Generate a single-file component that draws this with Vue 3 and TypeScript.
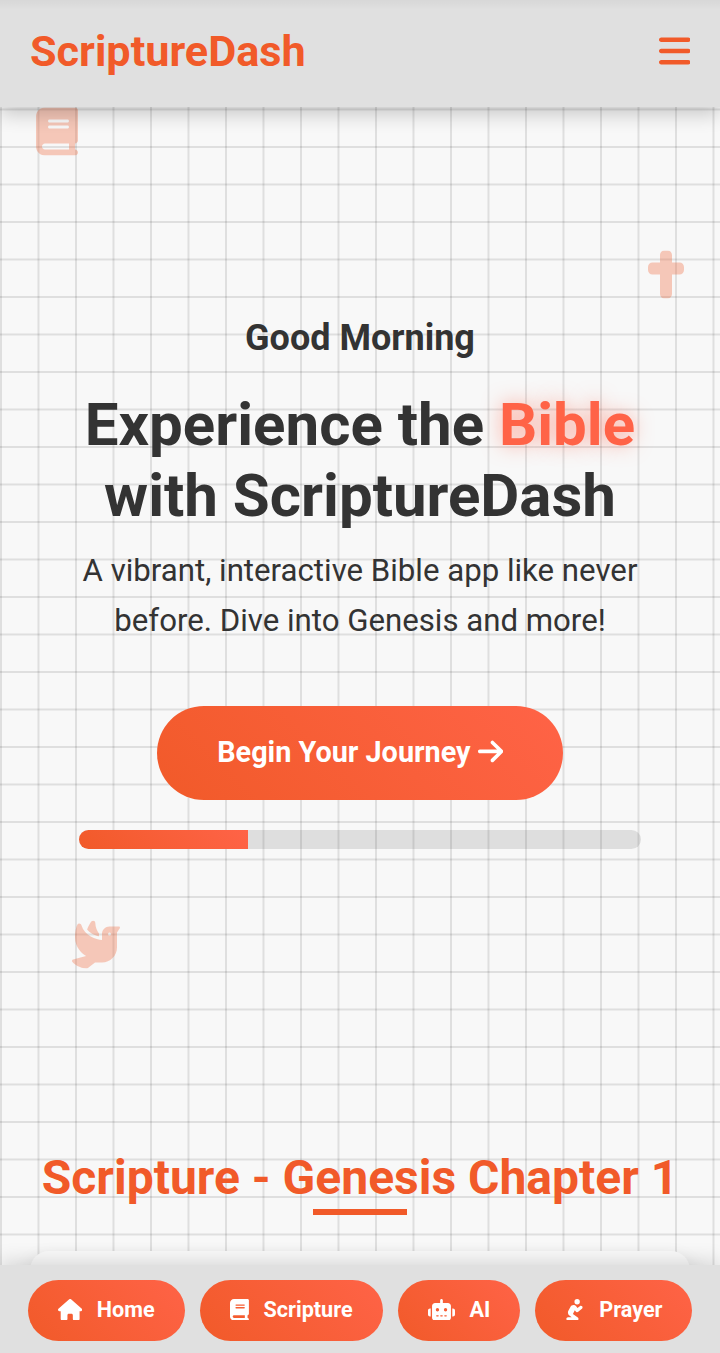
<script setup lang="ts">
interface Icon { w: number; d: string }

const icons: Record<string, Icon> = {
  bars: { w: 448, d: 'M0 96C0 78.3 14.3 64 32 64H416c17.7 0 32 14.3 32 32s-14.3 32-32 32H32C14.3 128 0 113.7 0 96zM0 256c0-17.7 14.3-32 32-32H416c17.7 0 32 14.3 32 32s-14.3 32-32 32H32c-17.7 0-32-14.3-32-32zM448 416c0 17.7-14.3 32-32 32H32c-17.7 0-32-14.3-32-32s14.3-32 32-32H416c17.7 0 32 14.3 32 32z' },
  book: { w: 448, d: 'M96 0C43 0 0 43 0 96V416c0 53 43 96 96 96H384h32c17.7 0 32-14.3 32-32s-14.3-32-32-32V384c17.7 0 32-14.3 32-32V32c0-17.7-14.3-32-32-32H384 96zm0 384H352v64H96c-17.7 0-32-14.3-32-32s14.3-32 32-32zm32-240c0-8.8 7.2-16 16-16H336c8.8 0 16 7.2 16 16s-7.2 16-16 16H144c-8.8 0-16-7.2-16-16zm16 48H336c8.8 0 16 7.2 16 16s-7.2 16-16 16H144c-8.8 0-16-7.2-16-16s7.2-16 16-16z' },
  cross: { w: 384, d: 'M176 0c-26.5 0-48 21.5-48 48v80H48c-26.5 0-48 21.5-48 48v32c0 26.5 21.5 48 48 48h80V464c0 26.5 21.5 48 48 48h32c26.5 0 48-21.5 48-48V256h80c26.5 0 48-21.5 48-48V176c0-26.5-21.5-48-48-48H256V48c0-26.5-21.5-48-48-48H176z' },
  dove: { w: 512, d: 'M160.8 96.5c14 17 31 30.9 49.5 42.2c25.9 15.8 53.7 25.9 77.7 31.6V138.8C265.8 108.5 250 71.5 248.6 28c-.4-11.3-7.5-21.5-18.4-24.4c-7.6-2-15.8-.2-21 5.8c-13.3 15.4-32.7 44.6-48.4 87.2zM320 144v30.6l0 0v1.3l0 0 0 32.1c-60.8-5.1-185-43.8-219.3-157.2C97.4 40 87.9 32 76.6 32c-7.9 0-15.3 3.9-18.8 11C46.8 65.9 32 112.1 32 176c0 116.9 80.1 180.5 118.4 202.8L11.8 416.6C6.7 418 2.6 421.8 .9 426.8s-.8 10.6 2.3 14.8C21.7 466.2 77.3 512 160 512c3.6 0 7.2-1.2 10-3.5L245.6 448H320c88.4 0 160-71.6 160-160V128l29.9-44.9c1.3-2 2.1-4.4 2.1-6.8c0-6.8-5.5-12.3-12.3-12.3H400c-44.2 0-80 35.8-80 80zm80-16a16 16 0 1 1 0 32 16 16 0 1 1 0-32z' },
  arrow: { w: 448, d: 'M438.6 278.6c12.5-12.5 12.5-32.8 0-45.3l-160-160c-12.5-12.5-32.8-12.5-45.3 0s-12.5 32.8 0 45.3L338.8 224 32 224c-17.7 0-32 14.3-32 32s14.3 32 32 32l306.7 0L233.4 393.4c-12.5 12.5-12.5 32.8 0 45.3s32.8 12.5 45.3 0l160-160z' },
  home: { w: 576, d: 'M575.8 255.5c0 18-15 32.1-32 32.1h-32l.7 160.2c0 2.7-.2 5.4-.5 8.1V472c0 22.1-17.9 40-40 40H456c-1.1 0-2.2 0-3.3-.1c-1.4 .1-2.8 .1-4.2 .1H416 392c-22.1 0-40-17.9-40-40V448 384c0-17.7-14.3-32-32-32H256c-17.7 0-32 14.3-32 32v64 24c0 22.1-17.9 40-40 40H160 128.1c-1.5 0-3-.1-4.5-.2c-1.2 .1-2.4 .2-3.6 .2H104c-22.1 0-40-17.9-40-40V360c0-.9 0-1.9 .1-2.8V287.6H32c-18 0-32-14-32-32.1c0-9 3-17 10-24L266.4 8c7-7 15-8 22-8s15 2 21 7L564.8 231.5c8 7 12 15 11 24z' },
  robot: { w: 640, d: 'M320 0c17.7 0 32 14.3 32 32V96H472c39.8 0 72 32.2 72 72V440c0 39.8-32.2 72-72 72H168c-39.8 0-72-32.2-72-72V168c0-39.8 32.2-72 72-72H288V32c0-17.7 14.3-32 32-32zM208 384c-8.8 0-16 7.2-16 16s7.2 16 16 16h32c8.8 0 16-7.2 16-16s-7.2-16-16-16H208zm96 0c-8.8 0-16 7.2-16 16s7.2 16 16 16h32c8.8 0 16-7.2 16-16s-7.2-16-16-16H304zm96 0c-8.8 0-16 7.2-16 16s7.2 16 16 16h32c8.8 0 16-7.2 16-16s-7.2-16-16-16H400zM264 256a40 40 0 1 0 -80 0 40 40 0 1 0 80 0zm152 40a40 40 0 1 0 0-80 40 40 0 1 0 0 80zM48 224H64V416H48c-26.5 0-48-21.5-48-48V272c0-26.5 21.5-48 48-48zm544 0c26.5 0 48 21.5 48 48v96c0 26.5-21.5 48-48 48H576V224h16z' },
  pray: { w: 448, d: 'M352 64A64 64 0 1 0 224 64a64 64 0 1 0 128 0zM232.7 264l22.9 31.5c6.5 8.9 16.3 14.7 27.2 16.1s21.9-1.7 30.4-8.7l88-72c17.1-14 19.6-39.2 5.6-56.3s-39.2-19.6-56.3-5.6l-55.2 45.2-26.2-36C253.6 156.7 228.6 144 202 144c-30.9 0-59.2 17.1-73.6 44.4L79.8 280.9c-20.2 38.5-9.4 85.9 25.6 111.8L158.6 432H72c-22.1 0-40 17.9-40 40s17.9 40 40 40H280c17.3 0 32.6-11.1 38-27.5s-.3-34.4-14.2-44.7L187.7 354l45-90z' },
}

const tabs = [
  { icon: 'home', label: 'Home' },
  { icon: 'book', label: 'Scripture' },
  { icon: 'robot', label: 'AI' },
  { icon: 'pray', label: 'Prayer' },
]
const floating = ['book', 'cross', 'dove']
const progress = 30
const box = (n: string) => `0 0 ${icons[n].w} 512`
</script>

<template>
  <div class="app">
    <header class="header">
      <div class="logo">ScriptureDash</div>
      <button class="menu" aria-label="Menu">
        <svg class="icon" :viewBox="box('bars')"><path :d="icons.bars.d" /></svg>
      </button>
    </header>

    <main class="content">
      <section class="hero">
        <svg v-for="n in floating" :key="n" class="icon float" :class="'float-' + n" :viewBox="box(n)">
          <path :d="icons[n].d" />
        </svg>
        <div class="greeting">Good Morning</div>
        <h1>Experience the <span class="glow">Bible</span><br />with ScriptureDash</h1>
        <p>A vibrant, interactive Bible app like never<br />before. Dive into Genesis and more!</p>
        <button class="cta">
          <span>Begin Your Journey</span>
          <svg class="icon" :viewBox="box('arrow')"><path :d="icons.arrow.d" /></svg>
        </button>
        <div class="progress"><div class="fill" :style="{ width: progress + '%' }"></div></div>
      </section>

      <section class="scripture">
        <h2>Scripture - Genesis Chapter 1</h2>
        <div class="rule"></div>
        <div class="card"></div>
      </section>
    </main>

    <nav class="tabs">
      <button v-for="t in tabs" :key="t.label" class="tab">
        <svg class="icon" :viewBox="box(t.icon)"><path :d="icons[t.icon].d" /></svg>
        <span>{{ t.label }}</span>
      </button>
    </nav>
  </div>
</template>

<style>
body { background: #f8f8f8; }
</style>

<style scoped>
.app {
  height: 1353px;
  overflow: hidden;
  display: flex;
  flex-direction: column;
  font-family: Roboto, sans-serif;
  color: #333;
  background-color: #f8f8f8;
  background-image:
    linear-gradient(rgba(0, 0, 0, 0.1) 1.875px, transparent 1.875px),
    linear-gradient(90deg, rgba(0, 0, 0, 0.1) 1.875px, transparent 1.875px);
  background-size: 37.5px 37.5px;
  background-position: 0 -4px;
}
button { border: 0; margin: 0; font-family: inherit; color: inherit; background: none; }
.icon { display: block; height: 1em; width: auto; fill: currentColor; flex: none; }

.header {
  position: relative;
  z-index: 2;
  flex: none;
  box-sizing: border-box;
  height: 107px;
  padding: 0 30px;
  display: flex;
  align-items: center;
  justify-content: space-between;
  color: #f15a29;
  background: linear-gradient(rgba(0, 0, 0, 0.04), transparent 10px) #e0e0e0;
  box-shadow: 0 7.5px 18.75px rgba(0, 0, 0, 0.2);
}
.logo { font-size: 43.2px; font-weight: 700; line-height: 50px; padding-bottom: 4px; }
.menu { padding: 0 0 6px; font-size: 36px; }

.content { flex: 1; min-height: 0; overflow: hidden; }
.hero {
  position: relative;
  box-sizing: border-box;
  height: 1013px;
  padding-top: 210px;
  display: flex;
  flex-direction: column;
  align-items: center;
  text-align: center;
}
.greeting { font-size: 36px; font-weight: 700; line-height: 42px; }
h1 { margin: 30px 0 0; font-size: 60px; font-weight: 700; line-height: 71px; }
.glow { color: #ff6347; text-shadow: 0 0 18.75px rgba(255, 99, 71, 0.5); }
p { margin: 15px 0 0; font-size: 31.2px; line-height: 50px; }
.cta {
  box-sizing: border-box;
  margin-top: 60px;
  height: 94px;
  padding: 0 60px 3px;
  display: flex;
  align-items: center;
  gap: 7px;
  border-radius: 47px;
  font-size: 28.8px;
  font-weight: 700;
  color: #fff;
  background: linear-gradient(45deg, #f15a29, #ff6347);
}
.progress {
  margin-top: 30px;
  width: 562px;
  height: 19px;
  border-radius: 9.5px;
  overflow: hidden;
  background: rgba(0, 0, 0, 0.1);
}
.fill { height: 100%; background: linear-gradient(45deg, #f15a29, #ff6347); }
.float { position: absolute; font-size: 48px; color: #f15a29; opacity: 0.3; transform: translateY(0.4px); }
.float-book { left: 36px; top: 0; }
.float-cross { right: 36px; top: 143px; }
.float-dove { left: 72px; top: 813px; }

.scripture { padding: 30px 30px 0; display: flex; flex-direction: column; align-items: center; }
h2 { margin: 0; font-size: 48px; font-weight: 700; line-height: 56px; color: #f15a29; white-space: nowrap; }
.rule { margin-top: 3px; width: 94px; height: 6px; background: #f15a29; }
.card {
  align-self: stretch;
  margin-top: 36px;
  height: 300px;
  border-radius: 19px;
  background: #fafafa;
  box-shadow: 0 9.375px 18.75px rgba(0, 0, 0, 0.15);
}

.tabs {
  position: relative;
  z-index: 2;
  flex: none;
  box-sizing: border-box;
  height: 88px;
  padding-top: 15px;
  display: flex;
  justify-content: center;
  align-items: flex-start;
  gap: 15px;
  background: #e0e0e0;
  box-shadow: 0 -4px 18.75px rgba(0, 0, 0, 0.14);
}
.tab {
  box-sizing: border-box;
  height: 61px;
  padding: 0 30px 2px;
  display: flex;
  align-items: center;
  gap: 15px;
  border-radius: 30.5px;
  font-size: 21.6px;
  font-weight: 700;
  color: #fff;
  background: linear-gradient(45deg, #f15a29, #ff6347);
}
</style>
